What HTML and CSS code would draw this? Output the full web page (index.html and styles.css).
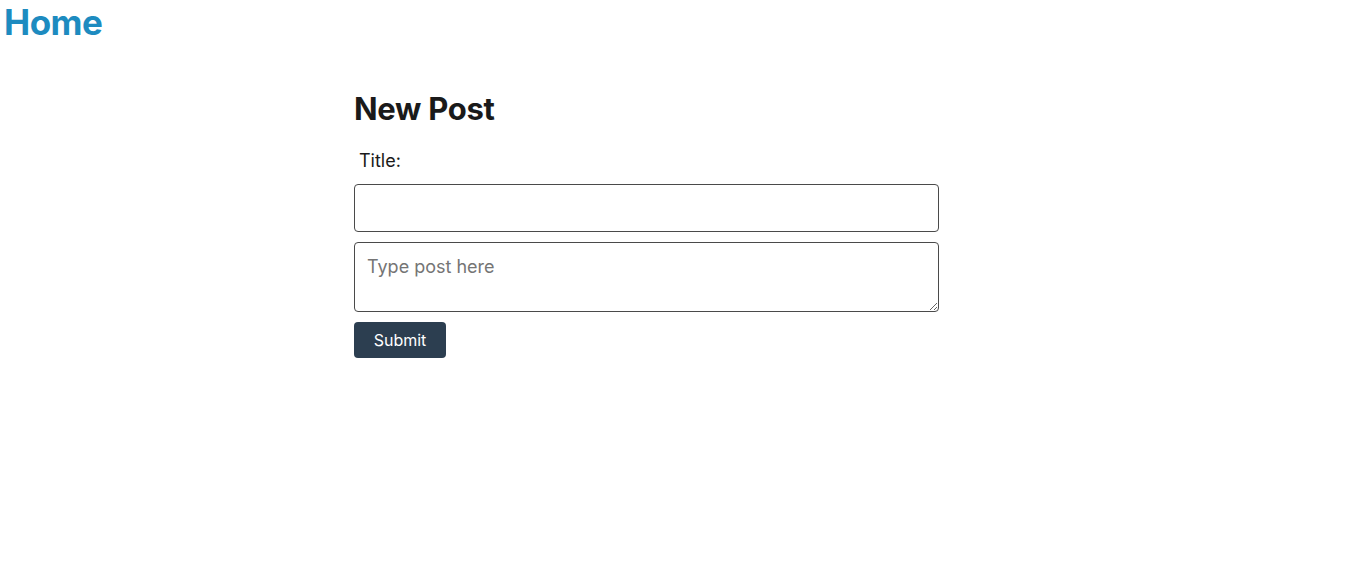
FILE: index.html
```html
<!DOCTYPE html>
<html>
<head>
<meta charset="utf-8">
<link rel="stylesheet" href="styles.css">
</head>
<body>
<header class="site-header">
  <a class="home-link" href="#">Home</a>
</header>
<main class="page">
  <form class="post-form">
    <h1 class="form-title">New Post</h1>
    <label class="field-label" for="title">Title:</label>
    <input class="text-input" id="title" type="text">
    <textarea class="text-area" placeholder="Type post here"></textarea>
    <div class="actions">
      <button class="submit-btn" type="button">Submit</button>
    </div>
  </form>
</main>
</body>
</html>
```

FILE: styles.css
```css
* { box-sizing: border-box; }
html, body { margin: 0; padding: 0; background: #fff; }
body {
  font-family: Inter, "Noto Sans", "Liberation Sans", sans-serif;
  color: #1a1a1a;
}
.site-header { padding: 2px 0 0 4px; }
.home-link {
  font-size: 35px;
  font-weight: 700;
  color: #1d8bc0;
  text-decoration: none;
  letter-spacing: -0.5px;
  line-height: 41px;
}
.page {
  display: flex;
  justify-content: flex-start;
  padding-left: 354px;
}
.post-form {
  width: 585px;
  display: flex;
  flex-direction: column;
  padding-top: 48px;
}
.form-title {
  margin: 0;
  font-size: 31px;
  font-weight: 700;
  line-height: 36px;
  letter-spacing: -0.3px;
  color: #1a1a1a;
}
.field-label {
  margin: 22px 0 0 5px;
  font-size: 18px;
  line-height: 24px;
  color: #1a1a1a;
}
.text-input {
  margin-top: 11px;
  height: 48px;
  width: 100%;
  border: 1px solid #4a4a4a;
  border-radius: 4px;
  font-family: inherit;
  font-size: 18px;
  padding: 0 12px;
}
.text-area {
  margin-top: 10px;
  height: 70px;
  width: 100%;
  border: 1px solid #4a4a4a;
  border-radius: 4px;
  font-family: inherit;
  font-size: 18px;
  padding: 13px 12px;
  resize: vertical;
}
.text-area::placeholder { color: #757575; }
.actions { margin-top: 10px; display: flex; }
.submit-btn {
  height: 36px;
  width: 92px;
  background: #2c3e50;
  color: #fff;
  border: none;
  border-radius: 4px;
  font-family: inherit;
  font-size: 16px;
  cursor: pointer;
}
```
